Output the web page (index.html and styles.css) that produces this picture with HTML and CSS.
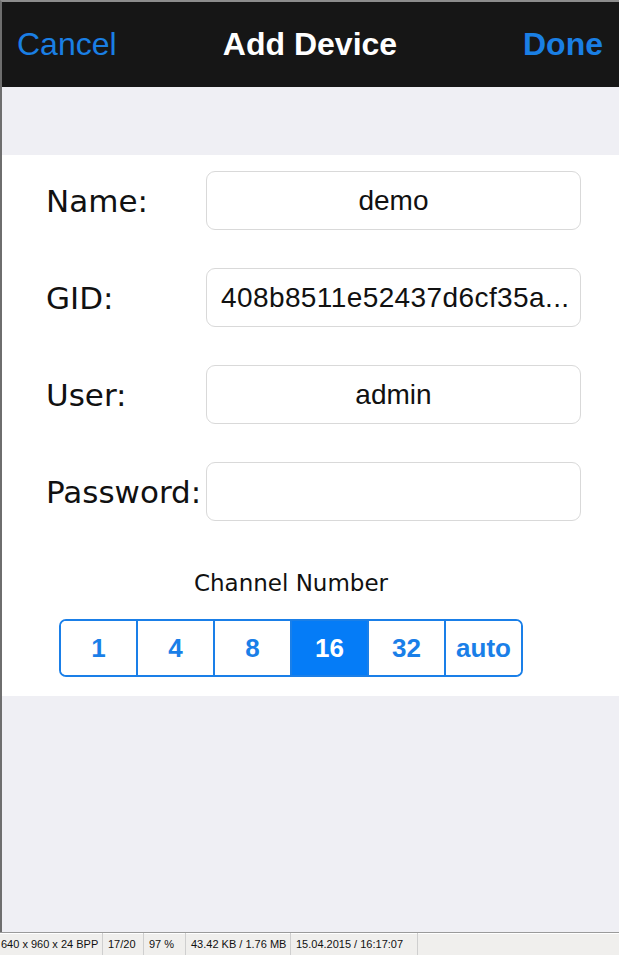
FILE: index.html
```html
<!DOCTYPE html>
<html lang="en">
<head>
  <meta charset="UTF-8">
  <meta name="viewport" content="width=device-width, initial-scale=1.0">
  <title>Add Device</title>
  <link rel="stylesheet" href="styles.css">
</head>
<body>

<div class="viewer">
  <div class="screen">
    <header class="navbar">
      <a class="nav-btn cancel" href="#">Cancel</a>
      <h1 class="nav-title">Add Device</h1>
      <a class="nav-btn done" href="#">Done</a>
    </header>

    <div class="spacer"></div>

    <!-- device form -->
    <section class="form">
      <div class="row">
        <label for="name">Name:</label>
        <input class="field" id="name" type="text" value="demo">
      </div>
      <div class="row">
        <label for="gid">GID:</label>
        <input class="field field-left" id="gid" type="text" value="408b8511e52437d6cf35a...">
      </div>
      <div class="row">
        <label for="user">User:</label>
        <input class="field" id="user" type="text" value="admin">
      </div>
      <div class="row">
        <label for="password">Password:</label>
        <input class="field" id="password" type="password" value="">
      </div>

      <div class="channel">
        <div class="channel-title">Channel Number</div>
        <div class="segments">
          <button class="seg">1</button>
          <button class="seg">4</button>
          <button class="seg">8</button>
          <button class="seg active">16</button>
          <button class="seg">32</button>
          <button class="seg">auto</button>
        </div>
      </div>
    </section>

    <div class="rest"></div>
  </div>

  <footer class="statusbar">
    <span class="cell c1">640 x 960 x 24 BPP</span>
    <span class="cell c2">17/20</span>
    <span class="cell c3">97 %</span>
    <span class="cell c4">43.42 KB / 1.76 MB</span>
    <span class="cell c5">15.04.2015 / 16:17:07</span>
    <span class="cell c6"></span>
  </footer>
</div>

</body>
</html>
```

FILE: styles.css
```css
* {
  margin: 0;
  padding: 0;
  box-sizing: border-box;
}
body {
  width: 619px;
  height: 955px;
  overflow: hidden;
  background: #efeff4;
  font-family: "Liberation Sans", Arial, sans-serif;
}
.viewer {
  display: flex;
  flex-direction: column;
  height: 955px;
}
.screen {
  flex: 1;
  display: flex;
  flex-direction: column;
  border-top: 2px solid #8c8c8c;
  border-left: 2px solid #6e6e6e;
  background: #efeff4;
}

/* nav bar */
.navbar {
  height: 85px;
  background: #161616;
  display: grid;
  grid-template-columns: 1fr auto 1fr;
  align-items: center;
  padding: 0 16px 0 15px;
}
.nav-btn {
  font-size: 32px;
  color: #1a7fe4;
  text-decoration: none;
}
.done {
  justify-self: end;
  font-weight: bold;
}
.nav-title {
  font-size: 32px;
  font-weight: bold;
  color: #ffffff;
}
.spacer {
  height: 68px;
}

/* form */
.form {
  background: #ffffff;
  padding: 16px 0 19px 44px;
}
.row {
  display: grid;
  grid-template-columns: 160px 375px;
  align-items: center;
  margin-bottom: 38px;
}
.row:last-of-type {
  margin-bottom: 0;
}
.row label {
  font-family: "DejaVu Sans", sans-serif;
  font-size: 31px;
  color: #111;
  white-space: nowrap;
}
.field {
  height: 59px;
  width: 375px;
  border: 1px solid #d9d9d9;
  border-radius: 9px;
  background: #fff;
  font-family: "Liberation Sans", Arial, sans-serif;
  font-size: 28px;
  color: #111;
  text-align: center;
  padding: 0 12px;
  outline: none;
}
.field-left {
  text-align: left;
  padding: 0 2px 0 14px;
  letter-spacing: 0.4px;
}

.channel {
  width: 464px;
  margin-left: 13px;
}
.channel-title {
  margin-top: 48px;
  line-height: 28px;
  text-align: center;
  font-family: "DejaVu Sans", sans-serif;
  font-size: 23px;
  color: #111;
}
.segments {
  display: flex;
  margin-top: 22px;
  height: 58px;
  border: 2px solid #1a7fe8;
  border-radius: 7px;
  overflow: hidden;
}
.seg {
  flex: 1;
  border: none;
  border-left: 2px solid #1a7fe8;
  background: #fff;
  color: #1a7fe8;
  font-family: "Liberation Sans", Arial, sans-serif;
  font-size: 26px;
  font-weight: bold;
  cursor: pointer;
}
.seg:first-child {
  border-left: none;
}
.seg.active {
  background: #057cf7;
  color: #fff;
}
.rest {
  flex: 1;
}

/* image viewer status bar */
.statusbar {
  height: 23px;
  display: flex;
  align-items: stretch;
  background: #f0efed;
  border-top: 1px solid #9a9a9a;
  box-shadow: inset 0 1px 0 #ffffff;
  font-family: "Liberation Sans", Arial, sans-serif;
  font-size: 11px;
  color: #111;
  white-space: nowrap;
}
.cell {
  flex-shrink: 0;
  display: flex;
  align-items: center;
  padding-left: 5px;
  border-right: 1px solid #cfcfcf;
  overflow: hidden;
}
.c1 { width: 103px; padding-left: 1px; }
.c2 { width: 41px; }
.c3 { width: 42px; }
.c4 { width: 105px; }
.c5 { width: 127px; }
.c6 { width: 0; border-right: 0; }
```
